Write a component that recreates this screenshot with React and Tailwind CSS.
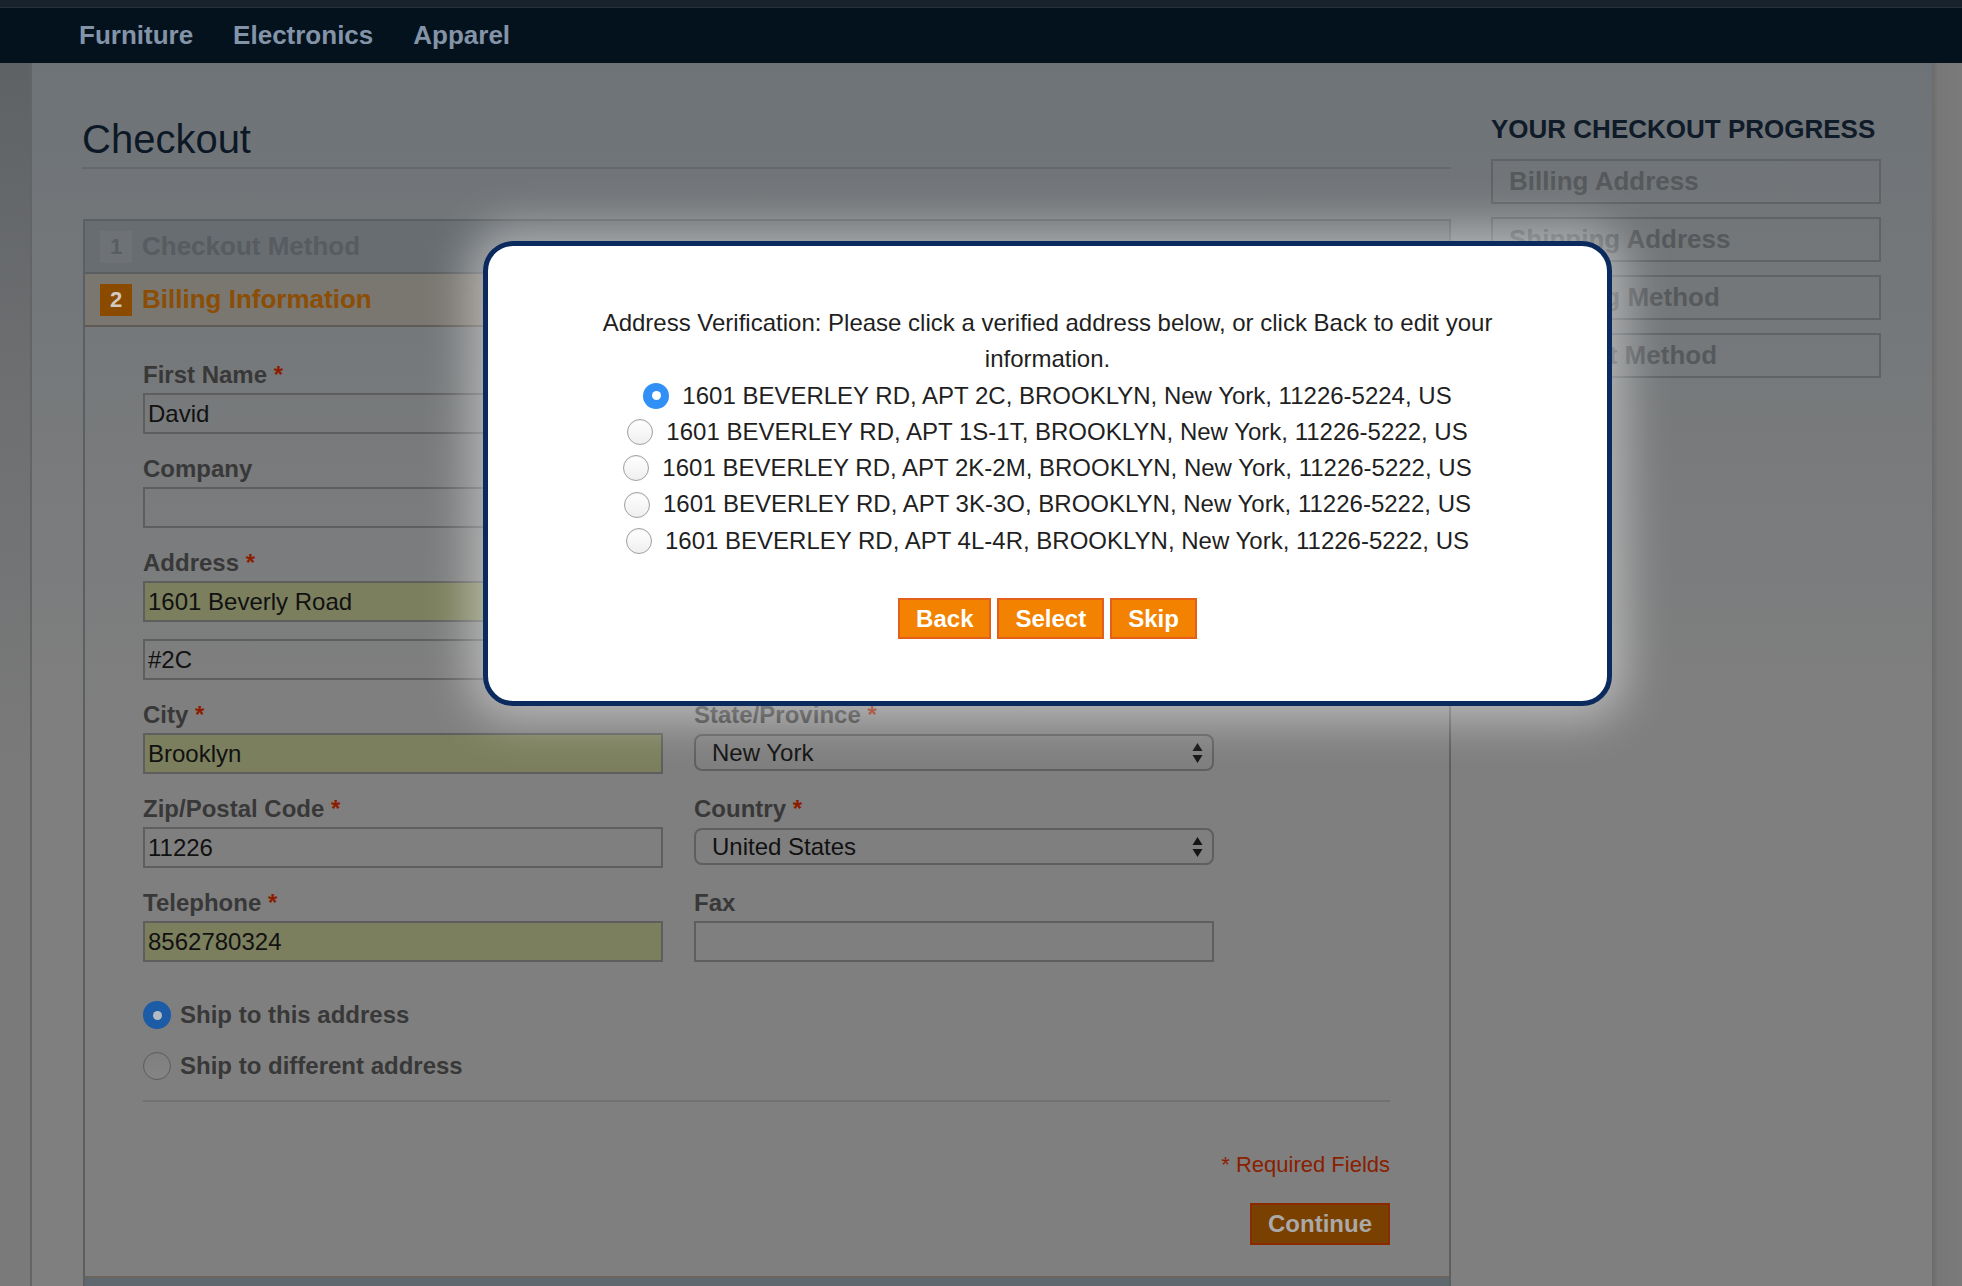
import React from "react";

const addresses = [
  "1601 BEVERLEY RD, APT 2C, BROOKLYN, New York, 11226-5224, US",
  "1601 BEVERLEY RD, APT 1S-1T, BROOKLYN, New York, 11226-5222, US",
  "1601 BEVERLEY RD, APT 2K-2M, BROOKLYN, New York, 11226-5222, US",
  "1601 BEVERLEY RD, APT 3K-3O, BROOKLYN, New York, 11226-5222, US",
  "1601 BEVERLEY RD, APT 4L-4R, BROOKLYN, New York, 11226-5222, US",
];

const progress = ["Billing Address", "Shipping Address", "Shipping Method", "Payment Method"];

function Label({ children, required }) {
  return (
    <label className="block text-[24px] leading-[28px] font-bold text-[#383838]">
      {children}
      {required && <span className="text-[#8c1c00]"> *</span>}
    </label>
  );
}

function TextInput({ value = "", filled, className = "mt-[4px]" }) {
  return (
    <input
      readOnly
      value={value}
      className={`${className} block w-full h-[41px] border-2 border-[#5e5e5e] px-[3px] text-[24px] text-[#111] outline-none ${
        filled ? "bg-[#7b7f5d]" : "bg-transparent"
      }`}
    />
  );
}

function SelectBox({ value }) {
  return (
    <div className="mt-[5px] h-[37px] rounded-[8px] border-2 border-[#5f5f5f] pl-[16px] pr-[9px] flex items-center justify-between text-[24px] text-[#111]">
      <span>{value}</span>
      <svg width="11" height="22" viewBox="0 0 11 22">
        <path d="M5.5 1 L10.5 9 H0.5 Z" fill="#151515" />
        <path d="M5.5 21 L10.5 13 H0.5 Z" fill="#151515" />
      </svg>
    </div>
  );
}

function Field({ label, required, children }) {
  return (
    <div>
      <Label required={required}>{label}</Label>
      {children}
    </div>
  );
}

function MacRadio({ checked }) {
  if (checked) {
    return (
      <span className="w-[26px] h-[26px] rounded-full bg-[#3090f6] flex items-center justify-center shrink-0">
        <span className="w-[9px] h-[9px] rounded-full bg-white" />
      </span>
    );
  }
  return (
    <span className="w-[26px] h-[26px] rounded-full border border-[#a0a0a0] bg-[linear-gradient(to_bottom,#ffffff,#efefef)] shadow-[inset_0_1px_1px_rgba(0,0,0,0.06)] shrink-0" />
  );
}

function DimRadio({ checked }) {
  if (checked) {
    return (
      <span className="w-[28px] h-[28px] rounded-full bg-[#1c5ba6] flex items-center justify-center shrink-0">
        <span className="w-[9px] h-[9px] rounded-full bg-[#b5bbc2]" />
      </span>
    );
  }
  return (
    <span className="w-[28px] h-[28px] rounded-full border-[1.5px] border-[#5c5c5c] bg-[linear-gradient(to_bottom,#7f7f7f,#858585)] shrink-0" />
  );
}

function StepHeader({ num, title, active }) {
  return (
    <div
      className={`h-[53px] border-b-2 flex items-center pl-[15px] gap-[10px] ${
        active ? "bg-[#7a7670] border-[#5f5a55]" : "bg-[#686d71] border-[#5a5e61]"
      }`}
    >
      <span
        className={`w-[32px] h-[32px] flex items-center justify-center text-[22px] font-bold ${
          active ? "bg-[#8a4a00] text-[#d2cac0]" : "bg-[#6e7276] text-[#585d61]"
        }`}
      >
        {num}
      </span>
      <span className={`text-[26px] font-bold ${active ? "text-[#8c4d04]" : "text-[#575c60]"}`}>{title}</span>
    </div>
  );
}

export default function App() {
  return (
    <div className="relative h-[1286px] w-full overflow-hidden bg-[#7a7a7a] font-['Liberation_Sans',Arial,sans-serif]">
      <header>
        <div className="h-[8px] bg-[#19232e] border-b border-[#26303b]" />
        <nav className="h-[55px] bg-[#04121e] flex items-center gap-[40px] pl-[79px] text-[26px] font-bold text-[#8494a8]">
          <span>Furniture</span>
          <span>Electronics</span>
          <span>Apparel</span>
        </nav>
      </header>

      <div className="flex h-[1223px]">
        <div className="w-[32px] bg-[linear-gradient(to_bottom,#5f6265_0px,#6c6e70_300px,#7a7a7a_700px)] border-r-2 border-[#646464]" />
        <main className="flex-1 flex pl-[50px] pr-[51px] gap-[40px] bg-[linear-gradient(to_bottom,#6e7377_0px,#7f7f7f_650px)]">
          {/* left column */}
          <div className="w-[1369px]">
            <h1 className="pt-[56px] pb-[8px] text-[40px] leading-[40px] text-[#0c1826] border-b-2 border-[#65696c]">
              Checkout
            </h1>

            <section className="mt-[50px] ml-[1px] border-2 border-b-0 border-[#5b5f62]">
              <StepHeader num="1" title="Checkout Method" />
              <StepHeader num="2" title="Billing Information" active />

              <div className="pt-[34px] pl-[58px] pr-[59px] pb-[31px] border-b-2 border-[#6b645c]">
                <div className="grid grid-cols-2 w-[1071px] gap-x-[31px] gap-y-[21px]">
                  <Field label="First Name" required>
                    <TextInput value="David" />
                  </Field>
                  <div />
                  <Field label="Company">
                    <TextInput />
                  </Field>
                  <div />
                  <div className="col-span-2">
                    <Label required>Address</Label>
                    <div className="w-[519px]">
                      <TextInput value="1601 Beverly Road" filled />
                      <TextInput value="#2C" className="mt-[17px]" />
                    </div>
                  </div>
                  <Field label="City" required>
                    <TextInput value="Brooklyn" filled />
                  </Field>
                  <Field label="State/Province" required>
                    <SelectBox value="New York" />
                  </Field>
                  <Field label="Zip/Postal Code" required>
                    <TextInput value="11226" />
                  </Field>
                  <Field label="Country" required>
                    <SelectBox value="United States" />
                  </Field>
                  <Field label="Telephone" required>
                    <TextInput value="8562780324" filled />
                  </Field>
                  <Field label="Fax">
                    <TextInput />
                  </Field>
                </div>

                <div className="mt-[39px] flex flex-col gap-[23px]">
                  <div className="h-[28px] flex items-center gap-[9px] text-[24px] font-bold text-[#383838]">
                    <DimRadio checked />
                    <span>Ship to this address</span>
                  </div>
                  <div className="h-[28px] flex items-center gap-[9px] text-[24px] font-bold text-[#383838]">
                    <DimRadio />
                    <span>Ship to different address</span>
                  </div>
                </div>

                <div className="mt-[20px] border-t-2 border-[#717171]" />

                <p className="mt-[50px] text-right text-[22px] leading-[26px] text-[#8a2000]">* Required Fields</p>
                <div className="mt-[25px] flex justify-end">
                  <button className="h-[42px] px-[16px] border-2 border-[#8a2a00] bg-[#7a4000] text-[24px] font-bold text-[#a9a9a9]">
                    Continue
                  </button>
                </div>
              </div>

              <div className="h-[53px] bg-[#5f686e]" />
            </section>
          </div>

          {/* right column */}
          <aside className="w-[390px] pt-[51px]">
            <h2 className="text-[26px] leading-[30px] font-bold uppercase text-[#0f1b29]">Your Checkout Progress</h2>
            <ul className="mt-[15px] flex flex-col gap-[13px]">
              {progress.map((p) => (
                <li
                  key={p}
                  className="h-[45px] border-2 border-[#5f6366] pl-[16px] flex items-center text-[26px] font-bold text-[#56595c]"
                >
                  {p}
                </li>
              ))}
            </ul>
          </aside>
        </main>
        <div className="w-[30px] bg-[linear-gradient(to_right,#6b6b6b_0px,#777777_6px,#7a7a7a_30px)]" />
      </div>

      {/* address verification dialog */}
      <div className="absolute left-[483px] top-[241px] w-[1129px] rounded-[30px] border-[5px] border-[#0b2a5e] bg-white shadow-[0_0_45px_14px_rgba(255,255,255,0.45)] pt-[59px] pb-[62px] text-[#1f1f1f]">
        <p className="mx-auto w-[940px] text-center text-[24px] leading-[36.3px]">
          Address Verification: Please click a verified address below, or click Back to edit your information.
        </p>
        <div className="text-[24px] leading-[36.3px]">
          {addresses.map((a, i) => (
            <div key={a} className="h-[36.3px] flex items-center justify-center gap-[13px]">
              <MacRadio checked={i === 0} />
              <span>{a}</span>
            </div>
          ))}
        </div>
        <div className="mt-[39px] flex justify-center gap-[6px]">
          {["Back", "Select", "Skip"].map((b) => (
            <button
              key={b}
              className="h-[41px] px-[16px] border-2 border-[#e2601a] bg-[#f38200] text-[24px] font-bold text-white"
            >
              {b}
            </button>
          ))}
        </div>
      </div>
    </div>
  );
}
